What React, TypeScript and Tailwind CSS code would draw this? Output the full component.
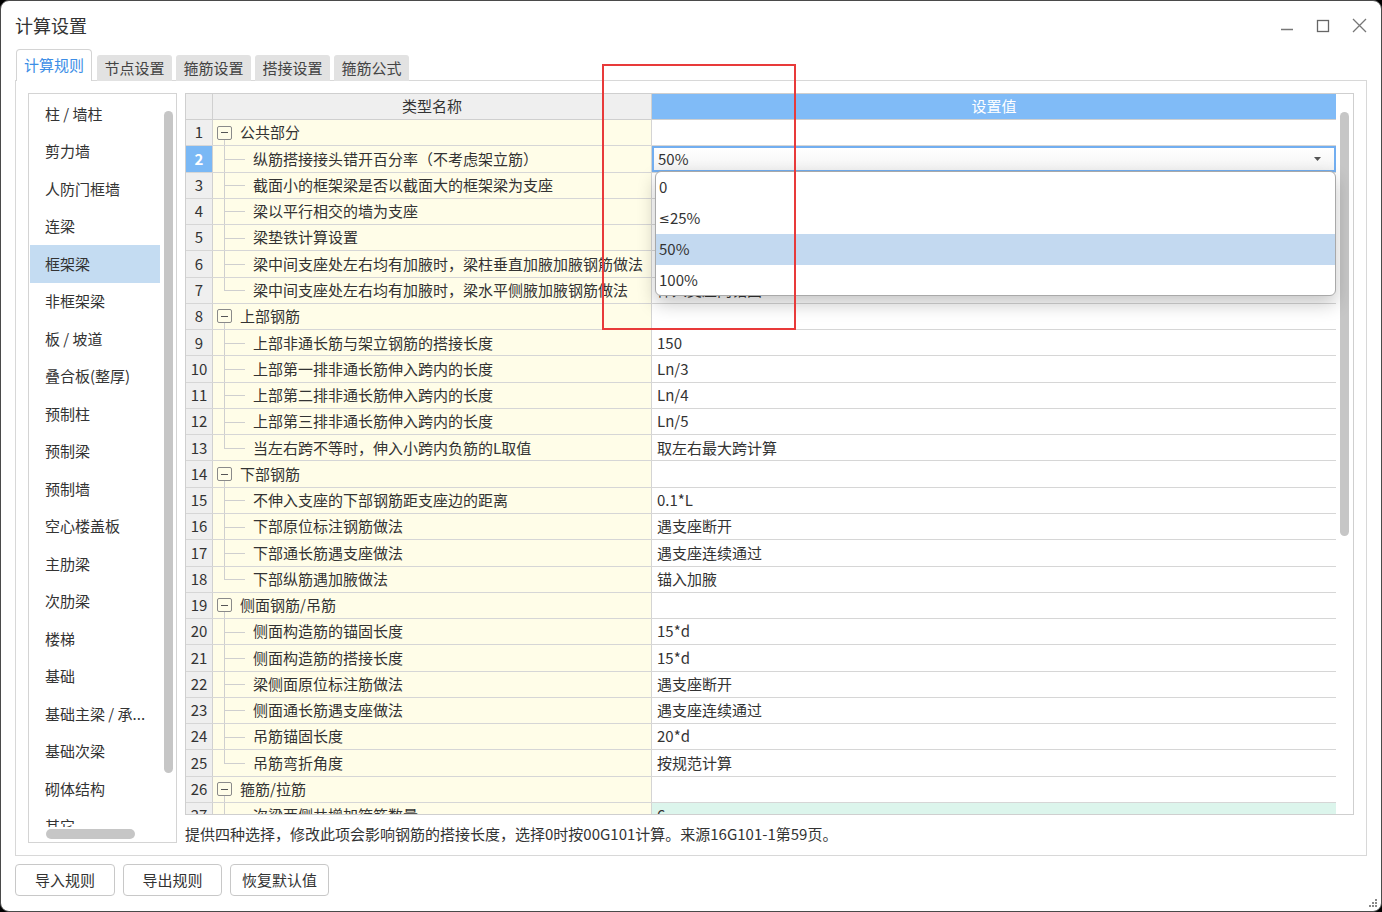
import React from 'react';

type Row = {
  no: number;
  name: string;
  value?: string;
  group?: boolean;
  last?: boolean;
  green?: boolean;
};

const rows: Row[] = [
  { no: 1, name: '公共部分', group: true },
  { no: 2, name: '纵筋搭接接头错开百分率（不考虑架立筋）', value: '50%' },
  { no: 3, name: '截面小的框架梁是否以截面大的框架梁为支座', value: '是' },
  { no: 4, name: '梁以平行相交的墙为支座', value: '否' },
  { no: 5, name: '梁垫铁计算设置', value: '按规范计算' },
  { no: 6, name: '梁中间支座处左右均有加腋时，梁柱垂直加腋加腋钢筋做法', value: '伸入支座内锚固' },
  { no: 7, name: '梁中间支座处左右均有加腋时，梁水平侧腋加腋钢筋做法', value: '伸入支座内锚固', last: true },
  { no: 8, name: '上部钢筋', group: true },
  { no: 9, name: '上部非通长筋与架立钢筋的搭接长度', value: '150' },
  { no: 10, name: '上部第一排非通长筋伸入跨内的长度', value: 'Ln/3' },
  { no: 11, name: '上部第二排非通长筋伸入跨内的长度', value: 'Ln/4' },
  { no: 12, name: '上部第三排非通长筋伸入跨内的长度', value: 'Ln/5' },
  { no: 13, name: '当左右跨不等时，伸入小跨内负筋的L取值', value: '取左右最大跨计算', last: true },
  { no: 14, name: '下部钢筋', group: true },
  { no: 15, name: '不伸入支座的下部钢筋距支座边的距离', value: '0.1*L' },
  { no: 16, name: '下部原位标注钢筋做法', value: '遇支座断开' },
  { no: 17, name: '下部通长筋遇支座做法', value: '遇支座连续通过' },
  { no: 18, name: '下部纵筋遇加腋做法', value: '锚入加腋', last: true },
  { no: 19, name: '侧面钢筋/吊筋', group: true },
  { no: 20, name: '侧面构造筋的锚固长度', value: '15*d' },
  { no: 21, name: '侧面构造筋的搭接长度', value: '15*d' },
  { no: 22, name: '梁侧面原位标注筋做法', value: '遇支座断开' },
  { no: 23, name: '侧面通长筋遇支座做法', value: '遇支座连续通过' },
  { no: 24, name: '吊筋锚固长度', value: '20*d' },
  { no: 25, name: '吊筋弯折角度', value: '按规范计算', last: true },
  { no: 26, name: '箍筋/拉筋', group: true },
  { no: 27, name: '次梁两侧共增加箍筋数量', value: '6', green: true },
];

const sideItems = [
  '柱 / 墙柱',
  '剪力墙',
  '人防门框墙',
  '连梁',
  '框架梁',
  '非框架梁',
  '板 / 坡道',
  '叠合板(整厚)',
  '预制柱',
  '预制梁',
  '预制墙',
  '空心楼盖板',
  '主肋梁',
  '次肋梁',
  '楼梯',
  '基础',
  '基础主梁 / 承...',
  '基础次梁',
  '砌体结构',
  '其它',
];

const tabs = ['计算规则', '节点设置', '箍筋设置', '搭接设置', '箍筋公式'];

function NameCell({ row }: { row: Row }) {
  if (row.group) {
    return (
      <div className="relative w-[439px] h-full bg-[#fffde8] border-r border-[#d4d4d4] flex items-center">
        <div className="ml-[4px] w-[15px] h-[14px] border border-[#8a8a8a] rounded-[2px] flex items-center justify-center bg-[#fffde8]">
          <div className="w-[7px] h-px bg-[#555]" />
        </div>
        <span className="absolute left-[11px] top-[calc(50%+7px)] bottom-0 w-px bg-[#cfcfcf]" />
        <span className="ml-[8px]">{row.name}</span>
      </div>
    );
  }
  return (
    <div className="relative w-[439px] h-full bg-[#fffde8] border-r border-[#d4d4d4] flex items-center pl-[40px]">
      <span className={`absolute left-[11px] top-0 w-px bg-[#cfcfcf] ${row.last ? 'h-1/2' : 'bottom-0'}`} />
      <span className="absolute left-[11px] top-1/2 w-[21px] h-px bg-[#cfcfcf]" />
      <span className="whitespace-nowrap">{row.name}</span>
    </div>
  );
}

function TableRow({ row }: { row: Row }) {
  const selected = row.no === 2;
  return (
    <div className="flex h-[26.28px] border-b border-[#d6d6d6] shrink-0">
      <div
        className={`w-[27px] h-full border-r border-[#d0d0d0] flex items-center justify-center text-[15px] ${
          selected ? 'bg-[#7ab8f5] text-white font-bold' : 'bg-[#efefef] text-[#333]'
        }`}
      >
        {row.no}
      </div>
      <NameCell row={row} />
      {selected ? (
        <div className="flex-1 h-full border-2 border-[#72aef0] bg-gradient-to-b from-white to-[#f3f3f3] flex items-center justify-between pl-[4px] pr-[13px]">
          <span>50%</span>
          <svg width="7" height="4" viewBox="0 0 7 4">
            <path d="M0 0 L7 0 L3.5 4 Z" fill="#555" />
          </svg>
        </div>
      ) : (
        <div className={`flex-1 h-full flex items-center pl-[5px] ${row.green ? 'bg-[#dcf5ec]' : 'bg-white'}`}>
          {row.value}
        </div>
      )}
    </div>
  );
}

export default function App() {
  return (
    <div className="w-[1382px] h-[912px] bg-black font-['Microsoft_YaHei','Noto_Sans_CJK_SC',sans-serif] text-[#333] text-[15px]">
      <div className="relative w-full h-full bg-white rounded-[9px] border border-[#4a4a4a] flex flex-col overflow-hidden">
        {/* title bar */}
        <div className="h-[49px] flex items-center justify-between pl-[14px] pr-[14px] shrink-0">
          <span className="text-[18px] text-[#333]">计算设置</span>
          <div className="flex items-center gap-[22px] text-[#666]">
            <svg width="14" height="14" viewBox="0 0 14 14">
              <path d="M1 10.5 H13" stroke="#777" strokeWidth="1.3" />
            </svg>
            <svg width="14" height="14" viewBox="0 0 14 14">
              <rect x="1.5" y="1.5" width="11" height="11" fill="none" stroke="#666" strokeWidth="1.3" />
            </svg>
            <svg width="15" height="15" viewBox="0 0 15 15">
              <path d="M1 1 L14 14 M14 1 L1 14" stroke="#777" strokeWidth="1.3" />
            </svg>
          </div>
        </div>

        {/* tabs */}
        <div className="flex items-end h-[31px] pl-[15px] gap-[4px] shrink-0 relative z-10 -mb-px">
          {tabs.map((t, i) =>
            i === 0 ? (
              <div
                key={t}
                className="w-[76px] h-[32px] mr-[1px] bg-white border border-b-0 border-[#d4d4d4] rounded-t-[4px] flex items-center justify-center text-[#3d8ee6] text-[15px]"
              >
                {t}
              </div>
            ) : (
              <div
                key={t}
                className="w-[75px] h-[26px] bg-[#e2e2e2] rounded-t-[3px] flex items-center justify-center text-[#444] text-[15px]"
              >
                {t}
              </div>
            )
          )}
        </div>

        {/* panel */}
        <div className="mx-[14px] h-[776px] border border-[#d8d8d8] flex gap-[8px] pt-[12px] pl-[12px] pr-[12px] shrink-0">
          {/* left list */}
          <div className="w-[149px] h-[750px] border border-[#d4d4d4] flex flex-col shrink-0">
            <div className="flex h-[733px] overflow-hidden pt-px">
              <div className="w-[130px] ml-px flex flex-col">
                {sideItems.map((s, i) => (
                  <div
                    key={s}
                    className={`h-[37.5px] shrink-0 flex items-center pl-[15px] whitespace-nowrap ${
                      i === 4 ? 'bg-[#c4dcf2]' : ''
                    }`}
                  >
                    {s}
                  </div>
                ))}
              </div>
              <div className="flex-1 flex justify-center">
                <div className="w-[9px] h-[662px] mt-[16px] rounded-full bg-[#c6c6c6]" />
              </div>
            </div>
            <div className="flex-1 pl-[17px] pt-[2px]">
              <div className="w-[89px] h-[10px] rounded-full bg-[#c6c6c6]" />
            </div>
          </div>

          {/* right */}
          <div className="flex-1 flex flex-col">
            <div className="relative h-[722px] border border-[#cfcfcf] flex">
              <div className="w-[1150px] flex flex-col overflow-hidden">
                <div className="flex h-[26px] border-b border-[#cfcfcf] shrink-0">
                  <div className="w-[27px] h-full bg-[#efefef] border-r border-[#d0d0d0]" />
                  <div className="w-[439px] h-full bg-[#efefef] border-r border-[#d0d0d0] flex items-center justify-center">
                    类型名称
                  </div>
                  <div className="flex-1 h-full bg-[#80bbf7] text-white flex items-center justify-center">设置值</div>
                </div>
                {rows.map((r) => (
                  <TableRow key={r.no} row={r} />
                ))}
              </div>
              <div className="flex-1 flex justify-center bg-white">
                <div className="w-[9px] h-[424px] mt-[18px] rounded-full bg-[#c6c6c6]" />
              </div>

              {/* dropdown list */}
              <div className="absolute left-[469px] top-[77px] w-[681px] h-[125px] bg-white border border-[#a9a9a9] rounded-[6px] shadow-[0_8px_18px_rgba(0,0,0,0.22)] flex flex-col overflow-hidden">
                <div className="h-[31px] flex items-center pl-[3px] shrink-0">0</div>
                <div className="h-[31px] flex items-center pl-[3px] shrink-0">
                  <span className="font-['DejaVu_Sans',sans-serif] text-[13px]">≤</span>25%
                </div>
                <div className="h-[31px] flex items-center pl-[3px] shrink-0 bg-[#c3d9f0]">50%</div>
                <div className="h-[31px] flex items-center pl-[3px] shrink-0">100%</div>
              </div>
            </div>
            <div className="pt-[9px] leading-[20px] whitespace-nowrap">
              提供四种选择，修改此项会影响钢筋的搭接长度，选择0时按00G101计算。来源16G101-1第59页。
            </div>
          </div>
        </div>

        {/* buttons */}
        <div className="flex gap-[8px] pl-[14px] mt-[8px]">
          <button className="w-[100px] h-[32px] border border-[#c8c8c8] rounded-[4px] bg-white text-[15px] text-[#333]">导入规则</button>
          <button className="w-[99px] h-[32px] border border-[#c8c8c8] rounded-[4px] bg-white text-[15px] text-[#333]">导出规则</button>
          <button className="w-[99px] h-[32px] border border-[#c8c8c8] rounded-[4px] bg-white text-[15px] text-[#333]">恢复默认值</button>
        </div>

        {/* resize grip */}
        <svg className="absolute right-[3px] bottom-[3px]" width="10" height="10" viewBox="0 0 10 10">
          <rect x="7" y="1" width="2" height="2" fill="#888" />
          <rect x="4" y="4" width="2" height="2" fill="#888" />
          <rect x="7" y="4" width="2" height="2" fill="#888" />
          <rect x="1" y="7" width="2" height="2" fill="#888" />
          <rect x="4" y="7" width="2" height="2" fill="#888" />
          <rect x="7" y="7" width="2" height="2" fill="#888" />
        </svg>

        {/* red highlight */}
        <div className="absolute left-[601px] top-[63px] w-[194px] h-[266px] border-2 border-[#e83a3a] pointer-events-none" />
      </div>
    </div>
  );
}
